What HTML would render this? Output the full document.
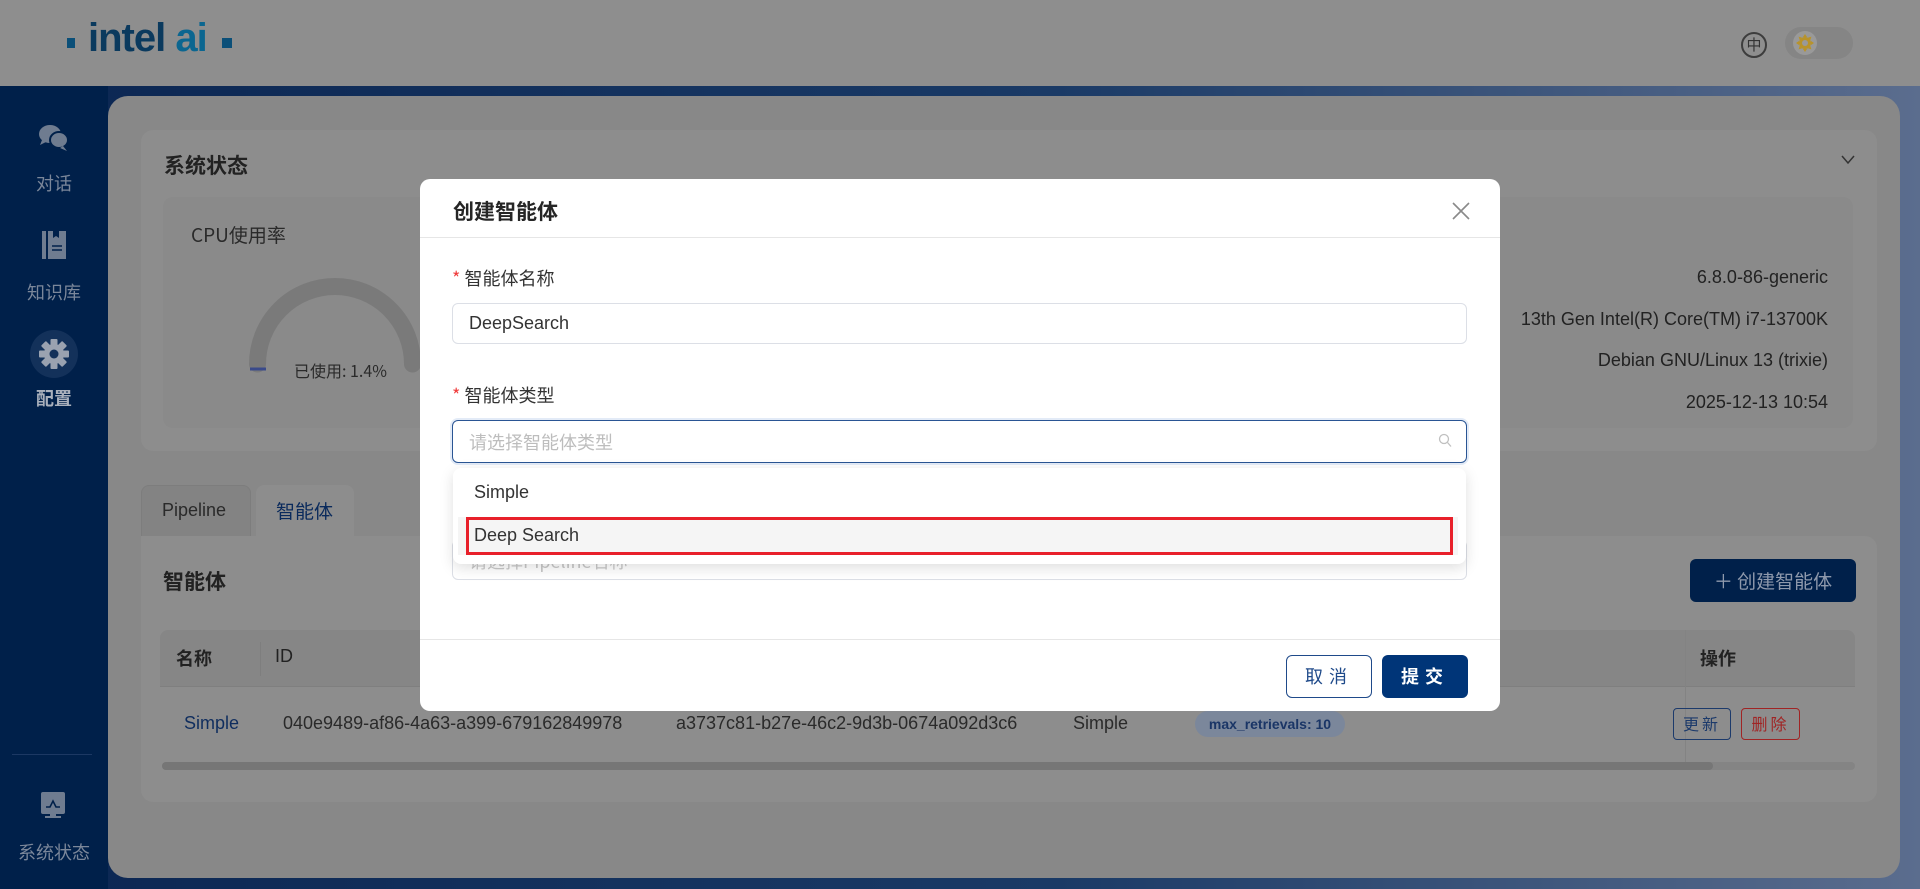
<!DOCTYPE html>
<html><head><meta charset="utf-8"><style>
*{margin:0;padding:0;box-sizing:border-box}
body{width:1920px;height:889px;overflow:hidden;position:relative;font-family:"Liberation Sans","Noto Sans CJK SC",sans-serif;background:linear-gradient(90deg,#0b2652 0%,#1a3a66 55%,#5b6d8e 100%);}
.abs{position:absolute}
.cn{font-family:"Noto Sans CJK SC","Liberation Sans",sans-serif}
</style></head><body>
<!-- header -->
<div class="abs" style="left:0;top:0;width:1920px;height:86px;background:#8e8e8e"></div>
<div class="abs" style="left:67px;top:38px;width:8px;height:10px;background:#0b4f78"></div>
<div class="abs" style="left:88px;top:16px;font-size:40px;font-weight:bold;color:#0b3a5e;letter-spacing:-1px;white-space:nowrap">intel <span style="color:#0b6690">ai</span></div>
<div class="abs" style="left:222px;top:38px;width:10px;height:10px;background:#0b4f78"></div>
<div class="abs cn" style="left:1741px;top:32px;width:26px;height:26px;border:2px solid #3d3d3d;border-radius:50%;font-size:15px;line-height:22px;text-align:center;color:#333">中</div>
<div class="abs" style="left:1785px;top:27px;width:68px;height:32px;border-radius:16px;background:#858585"></div>
<div class="abs" style="left:1793px;top:31px;width:24px;height:24px;border-radius:50%;background:#999"></div>
<svg class="abs" style="left:1795px;top:33px" width="20" height="20" viewBox="0 0 20 20"><g fill="#b8932a"><circle cx="10" cy="10" r="6"/><path d="M10 1l2 3h-4zM10 19l2-3h-4zM1 10l3 2v-4zM19 10l-3 2v-4zM3.6 3.6l3.4 1-2.4 2.4zM16.4 16.4l-3.4-1 2.4-2.4zM16.4 3.6l-1 3.4-2.4-2.4zM3.6 16.4l1-3.4 2.4 2.4z"/></g><circle cx="10" cy="10" r="3" fill="#999"/></svg>

<!-- sidebar -->
<div class="abs" style="left:0;top:86px;width:108px;height:803px;background:#00204a"></div>
<svg class="abs" style="left:38px;top:124px" width="32" height="28" viewBox="0 0 32 28"><ellipse cx="12" cy="10" rx="11" ry="9" fill="#6f7c90"/><path d="M4 16l-2 5 6-3z" fill="#6f7c90"/><ellipse cx="21" cy="16" rx="9" ry="8" fill="#6f7c90" stroke="#00204a" stroke-width="2"/><path d="M25 22l4 5-7-3z" fill="#6f7c90"/></svg>
<div class="abs cn" style="left:0;top:170px;width:108px;text-align:center;font-size:18px;color:#7b879a">对话</div>
<svg class="abs" style="left:42px;top:231px" width="26" height="28" viewBox="0 0 26 28"><rect x="0" y="0" width="4" height="28" fill="#6f7c90"/><rect x="6" y="0" width="18" height="28" fill="#6f7c90"/><path d="M11 0v7l3-2 3 2V0z" fill="#00204a"/><path d="M10 15h10M10 19h10" stroke="#00204a" stroke-width="1.5"/></svg>
<div class="abs cn" style="left:0;top:279px;width:108px;text-align:center;font-size:18px;color:#7b879a">知识库</div>
<div class="abs" style="left:30px;top:330px;width:48px;height:48px;border-radius:50%;background:#13315a"></div>
<svg class="abs" style="left:38px;top:338px" width="32" height="32" viewBox="0 0 32 32"><g fill="#9aa2b0" transform="translate(16 16)"><circle r="10"/><g id="t"><rect x="-3.5" y="-15" width="7" height="7" rx="1"/></g><use href="#t" transform="rotate(45)"/><use href="#t" transform="rotate(90)"/><use href="#t" transform="rotate(135)"/><use href="#t" transform="rotate(180)"/><use href="#t" transform="rotate(225)"/><use href="#t" transform="rotate(270)"/><use href="#t" transform="rotate(315)"/></g><circle cx="16" cy="16" r="4.5" fill="#13315a"/></svg>
<div class="abs cn" style="left:0;top:385px;width:108px;text-align:center;font-size:18px;font-weight:bold;color:#a9b0bc">配置</div>
<div class="abs" style="left:12px;top:754px;width:80px;height:1px;background:#1c3863"></div>
<svg class="abs" style="left:40px;top:792px" width="26" height="30" viewBox="0 0 26 30"><rect x="1" y="0" width="24" height="22" rx="2" fill="#6f7c90"/><path d="M6 15h4l3-6 3 6h4" stroke="#00204a" stroke-width="1.6" fill="none"/><rect x="5" y="24" width="16" height="2" fill="#6f7c90"/><rect x="10" y="22" width="6" height="3" fill="#6f7c90"/></svg>
<div class="abs cn" style="left:0;top:839px;width:108px;text-align:center;font-size:18px;color:#7b879a">系统状态</div>

<!-- main panel -->
<div class="abs" style="left:108px;top:96px;width:1792px;height:782px;background:#888;border-radius:20px 20px 20px 20px"></div>
<!-- status card -->
<div class="abs" style="left:141px;top:130px;width:1736px;height:321px;background:#8d8d8d;border-radius:12px"></div>
<div class="abs cn" style="left:164px;top:150px;font-size:21px;font-weight:bold;color:#222">系统状态</div>
<svg class="abs" style="left:1841px;top:155px" width="14" height="10"><path d="M1 1l6 7 6-7" stroke="#333" stroke-width="1.5" fill="none"/></svg>
<div class="abs" style="left:163px;top:197px;width:1690px;height:231px;background:#8a8a8a;border-radius:10px"></div>
<div class="abs cn" style="left:191px;top:221px;font-size:19px;color:#2a2a2a">CPU使用率</div>
<svg class="abs" style="left:240px;top:270px" width="200" height="110"><path d="M17.5 94 A77.5 77.5 0 0 1 172.5 94" stroke="#7a7a7a" stroke-width="17" fill="none" stroke-linecap="round"/><path d="M10 99h16" stroke="#3a4a8a" stroke-width="3"/></svg>
<div class="abs cn" style="left:294px;top:358px;font-size:16px;color:#2a2a2a">已使用: 1.4%</div>
<div class="abs" style="right:92px;top:257px;font-size:18px;color:#222;text-align:right;line-height:41.5px">6.8.0-86-generic<br>13th Gen Intel(R) Core(TM) i7-13700K<br>Debian GNU/Linux 13 (trixie)<br>2025-12-13 10:54</div>

<!-- tabs -->
<div class="abs" style="left:141px;top:485px;width:110px;height:52px;background:#838383;border:1px solid #7d7d7d;border-bottom:none;border-radius:8px 8px 0 0"></div>
<div class="abs" style="left:162px;top:500px;font-size:18px;color:#2a2a2a">Pipeline</div>
<div class="abs" style="left:256px;top:485px;width:98px;height:52px;background:#8d8d8d;border-radius:8px 8px 0 0"></div>
<div class="abs cn" style="left:276px;top:497px;font-size:19px;color:#0a2a5c">智能体</div>
<!-- agent card -->
<div class="abs" style="left:141px;top:536px;width:1736px;height:266px;background:#8d8d8d;border-radius:0 12px 12px 12px"></div>
<div class="abs cn" style="left:163px;top:566px;font-size:21px;font-weight:bold;color:#222">智能体</div>
<div class="abs cn" style="left:1690px;top:559px;width:166px;height:43px;background:#00204a;border-radius:6px;color:#8e99ac;font-size:19px;line-height:43px;text-align:center">＋ 创建智能体</div>
<div class="abs" style="left:160px;top:630px;width:1695px;height:57px;background:#868686;border-bottom:1px solid #7f7f7f;border-radius:8px 8px 0 0"></div>
<div class="abs" style="left:260px;top:642px;width:1px;height:34px;background:#7e7e7e"></div>
<div class="abs" style="left:1685px;top:630px;width:1px;height:132px;background:#838383"></div>
<div class="abs cn" style="left:176px;top:645px;font-size:18px;font-weight:bold;color:#222">名称</div>
<div class="abs" style="left:275px;top:646px;font-size:18px;color:#222">ID</div>
<div class="abs cn" style="left:1700px;top:645px;font-size:18px;font-weight:bold;color:#222">操作</div>
<div class="abs" style="left:184px;top:713px;font-size:18px;color:#0f2d5e">Simple</div>
<div class="abs" style="left:283px;top:713px;font-size:18px;color:#2a2a2a">040e9489-af86-4a63-a399-679162849978</div>
<div class="abs" style="left:676px;top:713px;font-size:18px;color:#2a2a2a">a3737c81-b27e-46c2-9d3b-0674a092d3c6</div>
<div class="abs" style="left:1073px;top:713px;font-size:18px;color:#2a2a2a">Simple</div>
<div class="abs" style="left:1195px;top:711px;width:150px;height:26px;border-radius:13px;background:#7b879b;color:#1a3566;font-size:14px;font-weight:bold;line-height:26px;text-align:center">max_retrievals: 10</div>
<div class="abs cn" style="left:1673px;top:708px;width:58px;height:32px;border:1.5px solid #1c3a6b;border-radius:4px;color:#1c3a6b;font-size:16px;line-height:29px;text-align:center;letter-spacing:3px">更新</div>
<div class="abs cn" style="left:1741px;top:708px;width:59px;height:32px;border:1.5px solid #a02424;border-radius:4px;color:#a02424;font-size:16px;line-height:29px;text-align:center;letter-spacing:3px">删除</div>
<div class="abs" style="left:162px;top:762px;width:1693px;height:8px;background:#848484;border-radius:4px"></div>
<div class="abs" style="left:162px;top:762px;width:1551px;height:8px;background:#767676;border-radius:4px"></div>

<!-- modal -->
<div class="abs" style="left:420px;top:179px;width:1080px;height:532px;background:#fff;border-radius:10px"></div>
<div class="abs cn" style="left:453px;top:196px;font-size:21px;font-weight:bold;color:#262626">创建智能体</div>
<svg class="abs" style="left:1452px;top:202px" width="18" height="18"><path d="M1 1l16 16M17 1L1 17" stroke="#8a8a8a" stroke-width="1.6"/></svg>
<div class="abs" style="left:420px;top:237px;width:1080px;height:1px;background:#e6e6e6"></div>
<div class="abs cn" style="left:452px;top:265px;font-size:18px;color:#333"><span style="color:#f03c3c">*</span> 智能体名称</div>
<div class="abs" style="left:452px;top:303px;width:1015px;height:41px;border:1px solid #dcdfe6;border-radius:6px"></div>
<div class="abs" style="left:469px;top:313px;font-size:18px;color:#333">DeepSearch</div>
<div class="abs cn" style="left:452px;top:382px;font-size:18px;color:#333"><span style="color:#f03c3c">*</span> 智能体类型</div>
<div class="abs" style="left:452px;top:420px;width:1015px;height:43px;border:1.5px solid #2a5594;border-radius:6px;box-shadow:0 0 0 2px #e3ebf7"></div>
<div class="abs cn" style="left:469px;top:429px;font-size:18px;color:#bdbdbd">请选择智能体类型</div>
<svg class="abs" style="left:1438px;top:433px" width="14" height="15"><circle cx="6" cy="6" r="4.5" stroke="#c0c0c0" stroke-width="1.3" fill="none"/><path d="M9.5 9.5l3.5 4" stroke="#c0c0c0" stroke-width="1.3"/></svg>
<div class="abs" style="left:452px;top:540px;width:1015px;height:40px;border:1px solid #dcdfe6;border-radius:6px"></div>
<div class="abs cn" style="left:469px;top:548px;font-size:18px;color:#c8c8c8">请选择Pipeline名称</div>
<div class="abs" style="left:453px;top:468px;width:1013px;height:96px;background:#fff;border-radius:8px;box-shadow:0 4px 14px rgba(0,0,0,0.13)"></div>
<div class="abs" style="left:474px;top:482px;font-size:18px;color:#333">Simple</div>
<div class="abs" style="left:458px;top:517px;width:1000px;height:38px;background:#f5f5f5"></div>
<div class="abs" style="left:466px;top:517px;width:987px;height:38px;border:3px solid #e8202a"></div>
<div class="abs" style="left:474px;top:525px;font-size:18px;color:#333">Deep Search</div>
<div class="abs" style="left:420px;top:639px;width:1080px;height:1px;background:#e6e6e6"></div>
<div class="abs cn" style="left:1286px;top:655px;width:86px;height:43px;border:1.5px solid #1f4a8a;border-radius:6px;color:#1f4a8a;font-size:18px;line-height:40px;text-align:center;letter-spacing:6px">取消</div>
<div class="abs cn" style="left:1382px;top:655px;width:86px;height:43px;background:#003578;border-radius:6px;color:#fff;font-size:18px;line-height:43px;text-align:center;letter-spacing:6px;font-weight:bold">提交</div>
</body></html>
